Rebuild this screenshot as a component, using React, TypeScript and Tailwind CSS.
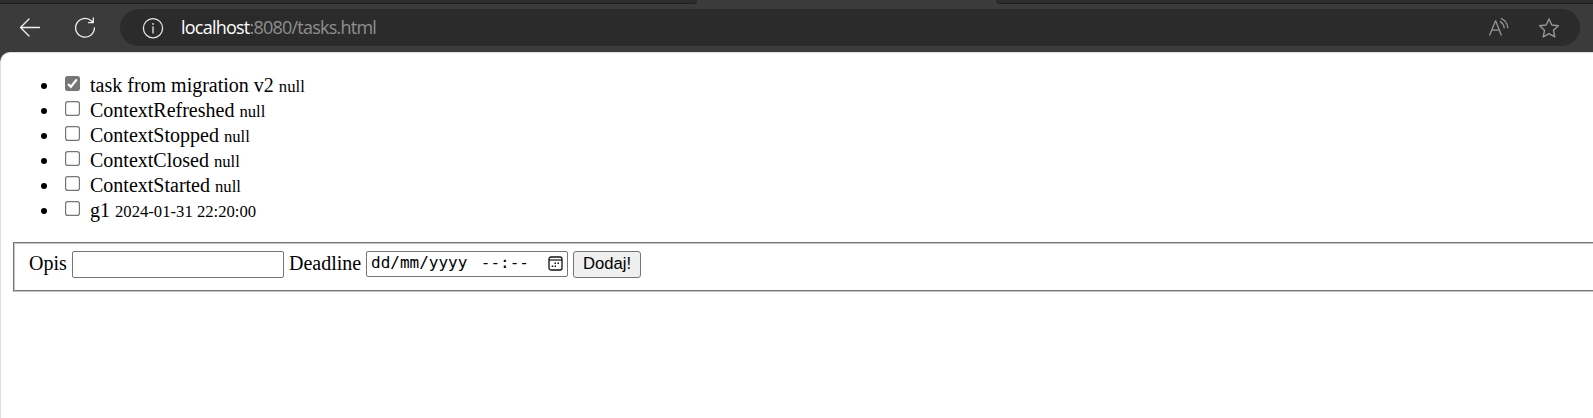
const tasks = [
  { name: 'task from migration v2', deadline: 'null', done: true },
  { name: 'ContextRefreshed', deadline: 'null', done: false },
  { name: 'ContextStopped', deadline: 'null', done: false },
  { name: 'ContextClosed', deadline: 'null', done: false },
  { name: 'ContextStarted', deadline: 'null', done: false },
  { name: 'g1', deadline: '2024-01-31 22:20:00', done: false },
];

function Toolbar() {
  return (
    <header className="h-[52px] bg-[#3b3b3b]">
      <div className="flex h-1 justify-between">
        <div className="w-[697px] rounded-br-[5px] border-b border-[#202020] bg-[#2d2d2d]" />
        <div className="w-[597px] rounded-bl-[5px] border-b border-[#202020] bg-[#2d2d2d]" />
      </div>
      <div className="flex pt-[5px] pr-[13px] pl-[18px]">
        <svg className="mt-[6px] h-6 w-6 shrink-0" viewBox="0 0 24 24" fill="none" stroke="#f2f2f2" strokeWidth="1.3" strokeLinecap="round" strokeLinejoin="round">
          <path d="M21.5 12.5H2.5M11 4L2.5 12.5L11 21" />
        </svg>
        <svg className="mt-[6px] ml-[31px] h-6 w-6 shrink-0" viewBox="0 0 24 24" fill="none" stroke="#f2f2f2" strokeWidth="1.3" strokeLinecap="round" strokeLinejoin="round">
          <path d="M21.4 12.8A9.4 9.4 0 1 1 18.3 5.8L20.3 7.6M20.3 3V7.6H15.5" />
        </svg>
        <div className="ml-[23px] flex h-[37px] flex-1 items-center rounded-full bg-[#2b2b2b] pr-[20px] pl-[22px]">
          <svg className="h-[22px] w-[22px] shrink-0" viewBox="0 0 22 22" fill="none" stroke="#e6e6e6" strokeWidth="1.3">
            <circle cx="11" cy="11.2" r="9.6" />
            <path d="M11 9.8V16" strokeLinecap="round" />
            <circle cx="11" cy="6.9" r="0.9" fill="#e6e6e6" stroke="none" />
          </svg>
          <div className="ml-[17px] flex-1 font-['Open_Sans',sans-serif] text-[18px] leading-[37px] tracking-[-0.77px] text-[#8f8f8f]">
            <span className="text-white">localhost</span>:8080/tasks.html
          </div>
          <svg className="mr-[28px] h-[22px] w-[22px]" viewBox="0 0 22 22" fill="none" stroke="#969696" strokeWidth="1.3" strokeLinecap="round" strokeLinejoin="round">
            <path d="M1.7 18L7.6 3.8L13.2 18M3.8 13.2H11.3" />
            <path d="M12.3 4.6Q15.6 6.4 16.2 10.8M13.2 1.6Q18.8 3.6 19.8 10.6" />
          </svg>
          <svg className="h-[22px] w-[22px]" viewBox="0 0 22 22" fill="none" stroke="#969696" strokeWidth="1.4" strokeLinejoin="round">
            <path d="M11 2L13.8 8L20.4 8.8L15.5 13.3L16.8 19.9L11 16.7L5.2 19.9L6.5 13.3L1.6 8.8L8.2 8Z" />
          </svg>
        </div>
      </div>
    </header>
  );
}

function Checkbox({ checked }: { checked: boolean }) {
  return (
    <svg className="mt-[3px] ml-[17px] h-[15px] w-[15px]" viewBox="0 0 15 15" role="checkbox" aria-checked={checked}>
      <rect x="0.6" y="0.6" width="13.8" height="13.8" rx="2.2" fill={checked ? '#767676' : '#fff'} stroke="#767676" strokeWidth="1.2" />
      {checked && <path d="M3 8L5.9 10.8L11.8 3.4" fill="none" stroke="#fff" strokeWidth="2.2" />}
    </svg>
  );
}

export default function App() {
  return (
    <div className="h-[418px] overflow-hidden bg-[#3b3b3b] font-['Liberation_Serif',serif] text-[20px] leading-[25px] text-black">
      <Toolbar />
      <main className="h-[366px] overflow-hidden rounded-tl-[10px] border-t border-l border-[#dedede] bg-white">
        <ul className="pt-[20px] pl-[40px]">
          {tasks.map((task) => (
            <li key={task.name} className="flex h-[25px] whitespace-pre">
              <span className="mt-[10px] mr-px h-[6px] w-[6px] rounded-full bg-black" />
              <Checkbox checked={task.done} />
              <span className="ml-[10px]">
                {task.name} <span className="text-[16.67px]">{task.deadline}</span>
              </span>
            </li>
          ))}
        </ul>
        <form className="mt-[19px] ml-[12px] h-[50px] border-t border-b border-l border-t-[#767676] border-b-[#c4c4c4] border-l-[#767676]">
          <div className="flex h-[48px] items-start border-t border-b border-l border-t-[#c4c4c4] border-b-[#767676] border-l-[#c4c4c4] pt-[7px] pl-[14px]">
            <label className="w-[38px] leading-[24px]">Opis</label>
            <input type="text" className="ml-[5px] h-[27px] w-[212px] rounded-[2px] border border-[#767676] bg-white" />
            <label className="ml-[5px] w-[72px] leading-[24px]">Deadline</label>
            <div className="ml-[5px] flex h-[26px] w-[202px] items-start rounded-[2px] border border-[#767676] bg-white pr-[4px] pl-[4px] font-['DejaVu_Sans_Mono',monospace] text-[16px] leading-[22px]">
              <span className="mr-auto whitespace-pre">dd/mm/yyyy</span>
              <span className="mr-[19px]">--:--</span>
              <svg className="mt-[4px] h-[15px] w-[15px]" viewBox="0 0 15 15" fill="none" stroke="#111">
                <rect x="1" y="1" width="13" height="13" rx="2" strokeWidth="1.3" />
                <path d="M1 4H14" strokeWidth="1.2" />
                <path d="M6.5 7.2H8M9.5 7.2H11M3.7 10.2H5.2M6.5 10.2H8" strokeWidth="1.5" />
              </svg>
            </div>
            <button type="button" className="ml-[5px] h-[27px] w-[68px] rounded-[3px] border border-[#767676] bg-[#efefef] pb-[2px] font-['Liberation_Sans',sans-serif] text-[16.67px] leading-[23px]">
              Dodaj!
            </button>
          </div>
        </form>
      </main>
    </div>
  );
}
